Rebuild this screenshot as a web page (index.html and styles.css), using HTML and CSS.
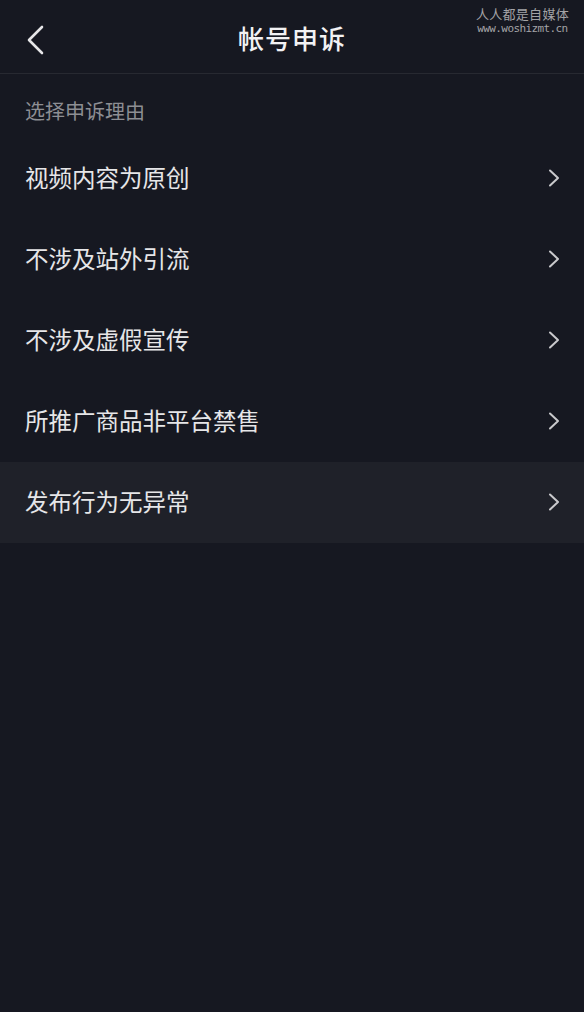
FILE: index.html
```html
<!DOCTYPE html>
<html>
<head>
  <title>帐号申诉</title>
  <link rel="stylesheet" href="styles.css">
</head>
<body>
  <div class="page">
    <div class="header">
      <a class="back" href="#">
        <svg width="20" height="30" viewBox="0 0 20 30"><path d="M17 2 L4 15 L17 28" fill="none" stroke="#e6e6e8" stroke-width="2.6" stroke-linecap="round" stroke-linejoin="round"/></svg>
      </a>
      <h1 class="title">帐号申诉</h1>
    </div>
    <div class="section-label">选择申诉理由</div>
    <ul class="reasons">
      <li class="reason"><span>视频内容为原创</span><svg class="arrow" width="14" height="20" viewBox="0 0 14 20"><path d="M3 2.5 L11 10 L3 17.5" fill="none" stroke="#c9c9cc" stroke-width="2" stroke-linecap="round" stroke-linejoin="round"/></svg></li>
      <li class="reason"><span>不涉及站外引流</span><svg class="arrow" width="14" height="20" viewBox="0 0 14 20"><path d="M3 2.5 L11 10 L3 17.5" fill="none" stroke="#c9c9cc" stroke-width="2" stroke-linecap="round" stroke-linejoin="round"/></svg></li>
      <li class="reason"><span>不涉及虚假宣传</span><svg class="arrow" width="14" height="20" viewBox="0 0 14 20"><path d="M3 2.5 L11 10 L3 17.5" fill="none" stroke="#c9c9cc" stroke-width="2" stroke-linecap="round" stroke-linejoin="round"/></svg></li>
      <li class="reason"><span>所推广商品非平台禁售</span><svg class="arrow" width="14" height="20" viewBox="0 0 14 20"><path d="M3 2.5 L11 10 L3 17.5" fill="none" stroke="#c9c9cc" stroke-width="2" stroke-linecap="round" stroke-linejoin="round"/></svg></li>
      <li class="reason active"><span>发布行为无异常</span><svg class="arrow" width="14" height="20" viewBox="0 0 14 20"><path d="M3 2.5 L11 10 L3 17.5" fill="none" stroke="#c9c9cc" stroke-width="2" stroke-linecap="round" stroke-linejoin="round"/></svg></li>
    </ul>
    <div class="watermark">
      <div class="wm-name">人人都是自媒体</div>
      <div class="wm-url">www.woshizmt.cn</div>
    </div>
  </div>
</body>
</html>
```

FILE: styles.css
```css
body {
  margin: 0;
  background-color: #161821;
  font-family: "Noto Sans CJK SC", "Noto Sans", sans-serif;
  color: #e8e8ea;
}
.page {
  position: relative;
  width: 584px;
  min-height: 1012px;
}
.header {
  height: 73px;
  border-bottom: 1px solid #272931;
  display: flex;
  align-items: center;
  justify-content: center;
  position: relative;
}
.back {
  position: absolute;
  left: 25px;
  top: 25px;
  display: block;
  height: 30px;
}
.title {
  margin: 0;
  font-size: 26px;
  font-weight: 500;
  color: #f2f2f4;
  letter-spacing: 1px;
  line-height: 1;
  padding-top: 2px;
}
.section-label {
  height: 64px;
  padding-left: 25px;
  box-sizing: border-box;
  display: flex;
  align-items: center;
  padding-top: 8px;
  font-size: 20px;
  color: #8d8e93;
}
.reasons {
  list-style: none;
  margin: 0;
  padding: 0;
}
.reason {
  height: 81px;
  padding: 0 23px 0 25px;
  display: flex;
  align-items: center;
  justify-content: space-between;
  font-size: 23.5px;
  color: #e6e6e8;
}
.reason span {
  margin-top: -4px;
}
.reason.active {
  background-color: #1f2129;
}
.arrow {
  display: block;
  margin-top: -2px;
}
.watermark {
  position: absolute;
  right: 15px;
  top: 5px;
  text-align: center;
  color: #a3a3a6;
}
.wm-name {
  font-size: 13px;
  line-height: 18px;
  letter-spacing: 0.3px;
}
.wm-url {
  font-family: "DejaVu Sans Mono", monospace;
  font-size: 11px;
  line-height: 12px;
  letter-spacing: -0.6px;
}
```
